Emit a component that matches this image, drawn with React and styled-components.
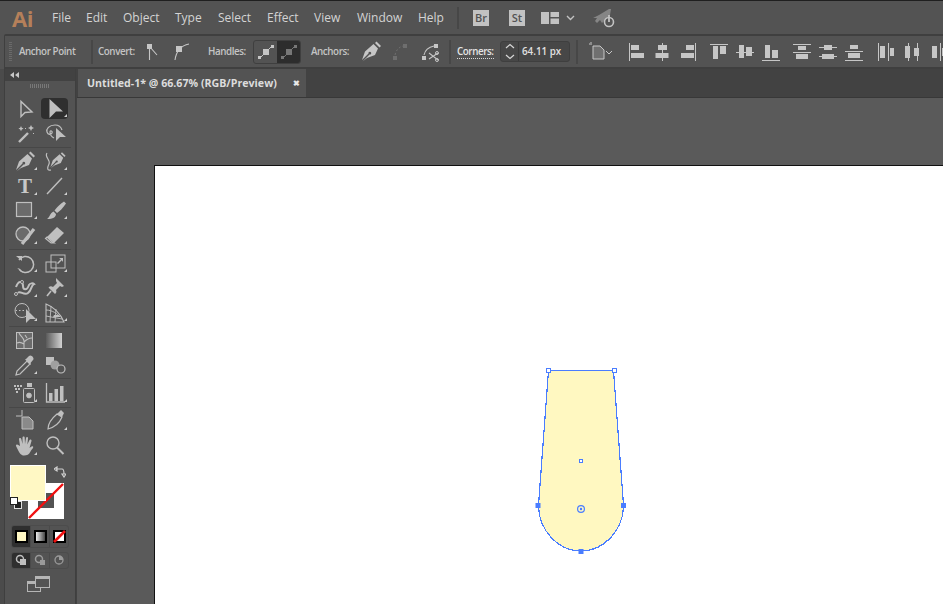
import React from "react";
import styled, { createGlobalStyle } from "styled-components";

const Global = createGlobalStyle`
  html, body { margin: 0; padding: 0; overflow: hidden; background: #535353; }
  * { box-sizing: border-box; }
`;
const UI = `"Open Sans", "Noto Sans", sans-serif`;

const Page = styled.div`
  width: 943px; height: 604px; display: flex; flex-direction: column; overflow: hidden;
  background: #535353; font-family: ${UI}; color: #cfcfcf;
`;
const MenuBar = styled.header`
  height: 34px; flex: none; display: flex; align-items: center; background: #535353;
  border-top: 1px solid #1f1f1f;
`;
const Logo = styled.div`
  width: 52px; padding-left: 12px; font: bold 22px "Open Sans", sans-serif; color: #b5805a; letter-spacing: -0.5px; line-height: 30px;
`;
const MenuItem = styled.div`
  width: ${p => p.$w}px; font-size: 12px; color: #d4d4d4; white-space: nowrap;
`;
const Sep = styled.div`
  width: 2px; height: ${p => p.$h || 22}px; flex: none; background: #474747; margin-left: ${p => p.$ml || 0}px;
`;
const Badge = styled.div`
  width: 16px; height: 16px; flex: none; background: #c2c2c2; color: #535353; margin-left: ${p => p.$ml}px;
  font: 600 11px/16px "Open Sans", sans-serif; text-align: center;
`;
const MenuGlyph = styled.svg`
  flex: none; margin-left: ${p => p.$ml}px; color: #c2c2c2;
`;
const ControlBar = styled.div`
  height: 35px; flex: none; display: flex; align-items: center; margin-left: 4px; background: #535353;
  border-top: 2px solid #3f3f3f; border-bottom: 2px solid #3f3f3f; border-left: 1px solid #3f3f3f; border-top-left-radius: 2px;
`;
const Grip = styled.div`
  width: 14px; height: 20px; flex: none; position: relative;
  &::before { content: ""; position: absolute; left: 4px; top: 0; width: 3px; height: 19px;
    background: repeating-linear-gradient(to bottom, #6a6a6a 0 1px, transparent 1px 2px); }
`;
const CLabel = styled.div`
  flex: none; width: ${p => p.$w}px; margin-left: ${p => p.$ml || 0}px; font-size: 9.8px; font-weight: 600; color: #c4c4c4; white-space: nowrap; letter-spacing: -0.42px;
  ${p => p.$dotted && `border-bottom: 1px dotted #d8d8d8; line-height: 13px; color: #e4e4e4;`}
`;
const CIcon = styled.svg`
  flex: none; display: block; margin-left: ${p => p.$ml || 0}px; color: ${p => p.$dim ? "#6e6e6e" : "#c6c6c6"};
`;
const HandleGroup = styled.div`
  flex: none; display: flex; margin-left: 7px; width: 48px; height: 24px; border: 1px solid #3f3f3f; border-radius: 3px; overflow: hidden;
`;
const HandleCell = styled.div`
  flex: 1; display: flex; align-items: center; justify-content: center; background: ${p => p.$on ? "#2d2d2d" : "transparent"};
  color: ${p => p.$on ? "#777" : "#c6c6c6"};
`;
const Corners = styled.div`
  flex: none; margin-left: 6px; width: 70px; height: 21px; display: flex; align-items: stretch; background: #474747; border: 1px solid #3f3f3f; border-radius: 3px;
`;
const Spinner = styled.div`
  width: 18px; flex: none; border-right: 1px solid #3a3a3a; display: flex; align-items: center; justify-content: center; color: #d8d8d8;
`;
const CornerValue = styled.div`
  font-size: 9.8px; font-weight: 600; color: #e0e0e0; line-height: 19px; padding-left: 3px; white-space: nowrap;
`;
const Workspace = styled.div`
  flex: 1; display: flex; min-height: 0;
`;
const ToolPanel = styled.aside`
  width: 77px; flex: none; padding-left: 4px; background: #4b4b4b; display: flex; border-right: 1px solid #424242;
`;
const ToolInner = styled.div`
  flex: 1; background: #535353; border-left: 1px solid #3f3f3f; border-right: 1px solid #3f3f3f; display: flex; flex-direction: column;
`;
const ToolHead = styled.div`
  height: 12px; flex: none; background: #424242; color: #c8c8c8; display: flex; align-items: center; padding-left: 5px;
`;
const ToolGrip = styled.div`
  height: 17px; flex: none; position: relative;
  &::before { content: ""; position: absolute; left: 25px; top: 3px; width: 19px; height: 4px;
    background: repeating-linear-gradient(to right, #787878 0 1px, transparent 1px 2px); }
`;
const ToolRow = styled.div`
  display: flex; height: ${p => p.$h || 24.5}px; padding-left: 5px;
`;
const Cell = styled.div`
  width: 30px; height: 100%; display: flex; align-items: center; justify-content: center; position: relative; color: #bfbfbf;
  &::before { ${p => p.$on && `content: ""; position: absolute; left: 1px; right: 2px; top: 0; bottom: 2px; background: #2f2f2f; border-radius: 4px;`} }
  &::after { ${p => p.$tri && `content: ""; position: absolute; right: 3px; bottom: 4px; border-left: 3px solid transparent; border-bottom: 3px solid #d0d0d0;`} }
  & > * { position: relative; z-index: 1; }
`;
const TypeGlyph = styled.span`
  font: bold 21px/24px "Liberation Serif", serif; color: #c8c8c8;
`;
const ToolSep = styled.div`
  height: 1px; flex: none; background: #474747; margin: ${p => p.$t ?? 1}px 4px ${p => p.$b ?? 2}px 4px;
`;
const Swatches = styled.div`
  height: 56px; margin-top: 6px; flex: none; position: relative;
`;
const FillSwatch = styled.div`
  position: absolute; left: 5px; top: 0; width: 36px; height: 36px; background: #fff8c4; border: 1px solid #fff; z-index: 2;
`;
const StrokeSwatch = styled.svg`
  position: absolute; left: 23px; top: 18px; z-index: 1;
`;
const SwapIcon = styled.svg`
  position: absolute; left: 49px; top: 1px;
`;
const DefaultIcon = styled.svg`
  position: absolute; left: 5px; top: 32px; z-index: 3;
`;
const ModeGroup = styled.div`
  flex: none; margin: ${p => p.$mt}px 0 0 6px; width: 58px; height: ${p => p.$h}px; display: flex; border: 1px solid #4c4c4c; border-radius: 3px; overflow: hidden;
`;
const ModeCell = styled.div`
  flex: 1; display: flex; align-items: center; justify-content: center; background: ${p => p.$on ? "#2f2f2f" : "transparent"};
  border-left: ${p => p.$first ? "none" : "1px solid #4a4a4a"};
`;
const ScreenMode = styled.div`
  flex: none; margin-top: 7px; display: flex; justify-content: center; padding-right: 2px;
`;
const Main = styled.main`
  flex: 1; display: flex; flex-direction: column; min-width: 0;
`;
const TabBar = styled.div`
  height: 29px; flex: none; background: #424242; border-bottom: 1px solid #383838; display: flex;
`;
const Tab = styled.div`
  width: 228px; margin-left: 1px; background: #535353; display: flex; align-items: center; justify-content: space-between; padding: 0 6px 0 9px;
  font-size: 10.65px; font-weight: 700; color: #dcdcdc; white-space: nowrap;
`;
const TabClose = styled.span`
  font-size: 8px; font-weight: 700; color: #e8e8e8; line-height: 1;
`;
const Canvas = styled.div`
  flex: 1; background: #5a5a5a; padding: 67px 0 0 77px; overflow: hidden;
`;
const Artboard = styled.div`
  width: 800px; height: 500px; background: #fff; border: 1px solid #111; position: relative;
`;
const ShapeLayer = styled.svg`
  position: absolute; left: 373px; top: 194px; overflow: visible;
`;

const menu = [["File", 34], ["Edit", 37], ["Object", 52], ["Type", 43], ["Select", 49], ["Effect", 47], ["View", 43], ["Window", 61], ["Help", 39]];

const P = ({ d, w = 1.4, f = "none" }) => <path d={d} fill={f} stroke="currentColor" strokeWidth={w} />;
const F = ({ d }) => <path d={d} fill="currentColor" />;

const nib = "M14.5 4 L19 8.5 L16 15 L8 18 L3.5 21.5 L10.5 14.5 A1.4 1.4 0 1 0 9.5 13.5 L3 20 L6 11.5 Z";
const cap = "M16 3 L17.5 1.5 L22 6 L20.5 7.5 Z";

const tools = {
  hollow: <P d="M8 3.5 L8 18.5 L12 14.5 L19 14 Z" />,
  solid: <F d="M6.5 1 L6.5 20 L13 13.5 L20 13.5 Z" />,
  wand: <><P d="M6 21 L15 12" w={2.4} /><F d="M18 4 l1 2 2 1 -2 1 -1 2 -1 -2 -2 -1 2 -1z M8 5 l.8 1.8 1.8.8 -1.8.8 -.8 1.8 -.8 -1.8 -1.8 -.8 1.8 -.8z" /><F d="M12 7h1v1h-1z M20 12h1v1h-1z" /></>,
  lasso: <><P d="M12 4 C6 4 3 8 4 11 C5 14 8 14 9 12 C10 10 7 9 7 11 C7 14 9 16 11 17 M12 4 C15 4 18 6 19 9" w={1.2} /><F d="M13 7 L13 20 L17 16 L23 16 Z" /></>,
  pen: <><F d={nib} /><F d={cap} /></>,
  curve: <><g transform="translate(5 1) scale(.8)"><F d={nib} /><F d={cap} /></g><P d="M4 3 C1 7 8 10 6 14 C4 18 4 21 8 20" w={1.2} /></>,
  line: <P d="M4 20 L19 4" w={1.4} />,
  rect: <rect x="3.5" y="3.5" width="15" height="14" fill="#6b6b6b" stroke="currentColor" strokeWidth="1.2" />,
  brush: <><F d="M21 2.5 L23 4.5 C20 9 17 12 14 14 L11.5 11.5 C14 8 17 5 21 2.5 Z" /><F d="M10.5 12.5 L13 15 C13 18 10 20 4 20 C7 18 7 14 10.5 12.5 Z" /></>,
  shaper: <><circle cx="10" cy="11" r="7" fill="#6b6b6b" stroke="currentColor" strokeWidth="1.3" /><P d="M9 21 L21 6" w={3.2} /></>,
  eraser: <><path d="M4 14 L14 4 L21 10 L11 20 Z" fill="currentColor" /><path d="M4 14 L8.5 18.5 L11 20 L8 20 L2.5 15.5 Z" fill="none" stroke="currentColor" strokeWidth="1.2" /></>,
  rotate: <><P d="M6 8 A8 8 0 1 1 6 17" w={1.5} /><path d="M5 16 A8 8 0 0 0 15 20" fill="none" stroke="currentColor" strokeDasharray="1.2 1.6" /><F d="M3 4 L9 4 L9 9 Z" /></>,
  scale: <><rect x="8" y="3" width="14" height="13" fill="none" stroke="currentColor" /><rect x="3" y="10" width="10" height="10" fill="none" stroke="currentColor" /><F d="M16 6 L20 6 L20 10 L18.8 8.2 L15 12 L14 11 L17.8 7.2 Z" /></>,
  warp: <><P d="M3 11 C6 3 10 6 10 10 C10 14 14 15 16 9 C17 7 20 7 21 8 C18 9 19 14 15 17 C11 20 7 14 5 17" w={2} /><circle cx="3" cy="18" r="1.5" fill="none" stroke="currentColor" /><circle cx="9" cy="6" r="1.5" fill="#535353" stroke="currentColor" /></>,
  pin: <><F d="M13 2 L21 10 L19 11 L17 10 L13 14 C14 16 13 17 12 18 L5.5 11.5 C7 10 8.5 10 10 11 L14 7 L13 5 Z" /><P d="M8 15 L4 20" w={1.6} /></>,
  free: <><circle cx="9" cy="9.5" r="7" fill="none" stroke="currentColor" /><F d="M2.5 9h1.5v1H2.5z M6 9h1.5v1H6z M9.5 9H11v1H9.5z" /><F d="M13 8 L13 22 L17 18 L23 18 Z" /></>,
  persp: <><P d="M3 3 L3 21 L21 21 C17 12 11 6 3 3 Z" w={1.1} /><P d="M3 9 C9 9 15 13 17 16 M3 15 L19 18 M8 5 L7 21 M13 8 L12 21" w={.9} /><F d="M11 14h5l1.5 2H10z" /></>,
  mesh: <><rect x="3.5" y="3.5" width="16" height="16" fill="#6b6b6b" stroke="currentColor" /><P d="M11 19 L11 12 C11 9 8 8 6 4 M11 13 C14 10 16 9 19 9 M11 15 C8 13 6 13 4 14 M12 6 L14 9" w={1.1} /></>,
  gradient: <><defs><linearGradient id="tg"><stop offset="0" stopColor="#5b5b5b" /><stop offset="1" stopColor="#d2d2d2" /></linearGradient></defs><rect x="3" y="4" width="16" height="15" fill="url(#tg)" /></>,
  dropper: <><P d="M3 21 L4 17 L14 7 L17 10 L7 20 Z" w={1.2} /><F d="M13 5 L16 2 C18 0 22 4 20 6 L17.5 9 L18 11 L12 5.5 Z" /></>,
  blend: <><F d="M3 3h8v8H3z" /><circle cx="12" cy="11" r="4.5" fill="#a0a0a0" /><circle cx="18" cy="15" r="4" fill="#535353" stroke="currentColor" strokeWidth="1.2" /></>,
  spray: <><F d="M14 2h5v4h-5z M1 4h2v2H1z M4 4h2v2H4z M7 4h2v2H7z M2 7h2v2H2z M5 7h2v2H5z M3 10h2v2H3z" /><rect x="10.5" y="7.5" width="11" height="14" rx="1" fill="#535353" stroke="currentColor" /><circle cx="16" cy="14.5" r="2.4" fill="#bfbfbf" stroke="#bfbfbf" /></>,
  graph: <><P d="M3.5 2 L3.5 21 L22 21" w={1.3} /><F d="M6 12h3.5v8H6z M11.5 8h3.5v12h-3.5z M17 5h3.5v15H17z" /></>,
  artboard: <><path d="M3 7 H9 M9 1 V7 " fill="none" stroke="currentColor" /><path d="M9 8 H16 L20 12 V20 H9 Z" fill="#8a8a8a" stroke="currentColor" /></>,
  slice: <><P d="M5 20 C5 15 8 10 14 5 L19 8 C17 13 12 18 5 20 Z" w={1.2} /><F d="M14 5 L18 1 L21 4 L19 8 Z" /></>,
  zoom: <><circle cx="10" cy="9" r="6" fill="none" stroke="currentColor" strokeWidth="1.4" /><P d="M14 13.5 L20.5 20" w={2} /></>,
  hand: <F d="M7 12 L6 5 C6 3.5 8 3.5 8.3 5 L9.5 10 L9.5 3.5 C9.5 2 11.7 2 11.7 3.5 L12 10 L13 4 C13.3 2.5 15.3 2.8 15 4.5 L14.3 10.5 L16.5 6 C17 4.8 19 5.5 18.5 7 L16.5 14 C17.5 13 19 11.5 20 12.5 C21 13.5 19 15 17.5 17.5 C16 20.5 14 21.5 11 21.5 C8 21.5 6.5 19 5.5 17 L3 12 C2.5 10.5 4.5 9.8 5.2 11 Z" />,
};

const Tool = ({ n, tri, on }) => (
  <Cell $tri={tri} $on={on}>
    {n === "type" ? <TypeGlyph>T</TypeGlyph> : <svg width="24" height="24" viewBox="0 0 24 24">{tools[n]}</svg>}
  </Cell>
);
const Row = ({ a, b, h }) => <ToolRow $h={h}>{a}{b}</ToolRow>;

const alignData = [
  { v: [2], r: [[4, 2, 8, 5], [4, 10, 13, 5]] },
  { v: [9], r: [[5, 2, 9, 5], [2.5, 10, 13, 5]] },
  { v: [16], r: [[7, 2, 8, 5], [2, 10, 13, 5]] },
  { h: [1], r: [[3, 3, 5, 13], [10, 3, 6, 8]] },
  { h: [9], r: [[3, 2, 5, 13], [10, 4, 6, 9]] },
  { h: [17], r: [[3, 2, 5, 13], [10, 7, 6, 8]] },
  { h: [1, 9], r: [[5, 3, 8, 4], [3, 11, 12, 5]] },
  { h: [4, 13], r: [[5, 2, 8, 5], [3, 11, 12, 5]] },
  { h: [8, 17], r: [[5, 2, 8, 4], [3, 10, 12, 5]] },
  { v: [1, 11], r: [[3, 3, 5, 12], [13, 5, 4, 8]] },
  { v: [5, 14], r: [[2, 3, 5, 12], [11, 5, 5, 8]] },
  { v: [11], r: [[3, 3, 5, 12], [13, 5, 5, 8]] },
];
const AlignIcon = ({ d, ml }) => (
  <CIcon $ml={ml} width="26" height="18" viewBox="-4 0 26 18">
    {(d.r).map((r, i) => <rect key={i} x={r[0]} y={r[1]} width={r[2]} height={r[3]} fill="currentColor" />)}
    {(d.v || []).map((x, i) => <rect key={i} x={x} y="0" width="1" height="18" fill="currentColor" />)}
    {(d.h || []).map((y, i) => <rect key={i} x="0" y={y} width="18" height="1" fill="currentColor" />)}
  </CIcon>
);
const handleSvg = (
  <svg width="18" height="18" viewBox="0 0 18 18">
    <path d="M3 15 L15 3" stroke="currentColor" strokeWidth="1" />
    <rect x="6" y="6" width="6" height="6" fill="currentColor" />
    <rect x="1" y="13" width="3" height="3" fill="currentColor" />
    <rect x="14" y="2" width="3" height="3" fill="currentColor" />
  </svg>
);

export default function App() {
  return (
    <Page>
      <Global />
      <MenuBar>
        <Logo>Ai</Logo>
        {menu.map(([t, w]) => <MenuItem key={t} $w={w}>{t}</MenuItem>)}
        <Sep $h={22} />
        <Badge $ml={14}>Br</Badge>
        <Badge $ml={20}>St</Badge>
        <MenuGlyph $ml={16} width="18" height="12" viewBox="0 0 18 12">
          <path d="M0 0h8v12H0z M9.5 0H18v5H9.5z M9.5 6.5H18V12H9.5z" fill="currentColor" />
        </MenuGlyph>
        <MenuGlyph $ml={7} width="9" height="6" viewBox="0 0 9 6">
          <path d="M1 1 L4.5 4.5 L8 1" fill="none" stroke="currentColor" strokeWidth="1.4" />
        </MenuGlyph>
        <MenuGlyph $ml={17} width="24" height="20" viewBox="0 0 24 20">
          <path d="M1 10 L7 7 L17 1 L19 1 L18 7 L13 12 C12 13 11 14 10 15 L8 12 L5 15 L3 13 L5 10 Z" fill="#858585" />
          <circle cx="17" cy="14" r="4.5" fill="#535353" stroke="currentColor" strokeWidth="1.6" />
          <path d="M17 7 V14" stroke="currentColor" strokeWidth="1.8" />
        </MenuGlyph>
      </MenuBar>

      <ControlBar>
        <Grip />
        <CLabel $w={72}>Anchor Point</CLabel>
        <Sep $h={24} />
        <CLabel $w={38} $ml={5}>Convert:</CLabel>
        <CIcon width="30" height="22" viewBox="0 0 30 22">
          <rect x="11" y="3" width="5" height="5" fill="currentColor" />
          <path d="M13.5 5 V19 M14 6 L21 14" fill="none" stroke="currentColor" strokeWidth="1.1" />
        </CIcon>
        <CIcon width="30" height="22" viewBox="0 0 30 22">
          <rect x="10" y="5" width="6" height="6" fill="currentColor" />
          <path d="M9 19 C10 12 13 5 23 3" fill="none" stroke="currentColor" strokeWidth="1.1" />
        </CIcon>
        <CLabel $w={38} $ml={12}>Handles:</CLabel>
        <HandleGroup>
          <HandleCell>{handleSvg}</HandleCell>
          <HandleCell $on>{handleSvg}</HandleCell>
        </HandleGroup>
        <CLabel $w={38} $ml={10}>Anchors:</CLabel>
        <CIcon $ml={4} width="30" height="24" viewBox="-3 0 24 24" >{tools.pen}</CIcon>
        <CIcon $dim width="30" height="22" viewBox="0 0 30 22">
          <rect x="10" y="15" width="4" height="4" fill="currentColor" />
          <rect x="20" y="3" width="4" height="4" fill="currentColor" />
          <path d="M12 14 C13 9 16 6 20 5" fill="none" stroke="currentColor" strokeDasharray="2 2" />
        </CIcon>
        <CIcon $ml={2} width="30" height="24" viewBox="0 0 30 24">
          <rect x="7" y="16" width="4" height="4" fill="currentColor" />
          <rect x="19" y="4" width="4" height="4" fill="currentColor" />
          <path d="M9 15 C10 10 14 7 19 6 M14 13 L23 20 M14 19 L23 13" fill="none" stroke="currentColor" strokeWidth="1.1" />
          <circle cx="22" cy="13" r="1.5" fill="none" stroke="currentColor" />
          <circle cx="22" cy="20" r="1.5" fill="none" stroke="currentColor" />
        </CIcon>
        <Sep $ml={4} $h={24} />
        <CLabel $w={37} $ml={6} $dotted>Corners:</CLabel>
        <Corners>
          <Spinner>
            <svg width="10" height="17" viewBox="0 0 10 17">
              <path d="M1 5 L5 1.5 L9 5 M1 12 L5 15.5 L9 12" fill="none" stroke="currentColor" strokeWidth="1.2" />
            </svg>
          </Spinner>
          <CornerValue>64.11 px</CornerValue>
        </Corners>
        <Sep $ml={6} $h={24} />
        <CIcon $ml={10} width="25" height="20" viewBox="0 0 25 20">
          <path d="M1 2h3 M3 0v1" stroke="currentColor" />
          <path d="M5 4 H12 L16 8 V17 H5 Z" fill="#707070" stroke="currentColor" />
          <path d="M18 9 L21 12 L24 9" fill="none" stroke="currentColor" strokeWidth="1" />
        </CIcon>
        {alignData.map((d, i) => <AlignIcon key={i} d={d} ml={i === 0 ? 10 : i === 3 || i === 6 ? 5 : i === 9 ? 6 : 0} />)}
      </ControlBar>

      <Workspace>
        <ToolPanel>
          <ToolInner>
            <ToolHead>
              <svg width="9" height="6" viewBox="0 0 9 6"><path d="M4 0 L0 3 L4 6 Z M9 0 L5 3 L9 6 Z" fill="currentColor" /></svg>
            </ToolHead>
            <ToolGrip />
            <Row h={23} a={<Tool n="hollow" />} b={<Tool n="solid" on tri />} />
            <Row a={<Tool n="wand" />} b={<Tool n="lasso" />} />
            <ToolSep />
            <Row a={<Tool n="pen" tri />} b={<Tool n="curve" tri />} />
            <Row a={<Tool n="type" tri />} b={<Tool n="line" tri />} />
            <Row a={<Tool n="rect" tri />} b={<Tool n="brush" tri />} />
            <Row a={<Tool n="shaper" tri />} b={<Tool n="eraser" tri />} />
            <ToolSep />
            <Row a={<Tool n="rotate" tri />} b={<Tool n="scale" tri />} />
            <Row a={<Tool n="warp" tri />} b={<Tool n="pin" tri />} />
            <Row a={<Tool n="free" tri />} b={<Tool n="persp" tri />} />
            <ToolSep />
            <Row a={<Tool n="mesh" />} b={<Tool n="gradient" />} />
            <Row a={<Tool n="dropper" tri />} b={<Tool n="blend" />} />
            <ToolSep $t={0} $b={2} />
            <Row a={<Tool n="spray" tri />} b={<Tool n="graph" tri />} />
            <ToolSep $t={1} $b={1} />
            <Row h={25.5} a={<Tool n="artboard" />} b={<Tool n="slice" tri />} />
            <Row a={<Tool n="hand" tri />} b={<Tool n="zoom" />} />
            <Swatches>
              <FillSwatch />
              <StrokeSwatch width="36" height="36" viewBox="0 0 36 36">
                <rect width="36" height="36" fill="#fff" />
                <rect x="10" y="10" width="16" height="15" fill="#535353" />
                <path d="M1 35 L35 1" stroke="#f01010" strokeWidth="2.4" />
              </StrokeSwatch>
              <SwapIcon width="12" height="12" viewBox="0 0 12 12">
                <path d="M2 3 H8 C10 3 10 5 10 8 M0 3 L3 1 V5 Z M8 8 H12 L10 11 Z" fill="none" stroke="#d0d0d0" strokeWidth="1.2" />
              </SwapIcon>
              <DefaultIcon width="12" height="12" viewBox="0 0 12 12">
                <rect x="4.5" y="4.5" width="7" height="7" fill="#222" stroke="#e0e0e0" />
                <rect x="0.5" y="0.5" width="7" height="7" fill="#fff" stroke="#222" />
              </DefaultIcon>
            </Swatches>
            <ModeGroup $mt={4} $h={23}>
              <ModeCell $first $on><svg width="13" height="13"><rect x="1" y="1" width="11" height="11" fill="#fff8c4" stroke="#000" strokeWidth="2" /></svg></ModeCell>
              <ModeCell><svg width="13" height="13"><defs><linearGradient id="mg"><stop offset="0" stopColor="#fff" /><stop offset="1" stopColor="#333" /></linearGradient></defs><rect x="1" y="1" width="11" height="11" fill="url(#mg)" stroke="#000" strokeWidth="2" /></svg></ModeCell>
              <ModeCell><svg width="13" height="13"><rect x="1" y="1" width="11" height="11" fill="#fff" stroke="#000" strokeWidth="2" /><path d="M1 12 L12 1" stroke="#f01010" strokeWidth="2.6" /></svg></ModeCell>
            </ModeGroup>
            <ModeGroup $mt={4} $h={17}>
              <ModeCell $first $on><svg width="12" height="12"><circle cx="5" cy="5" r="3.5" fill="none" stroke="#c0c0c0" strokeWidth="1.5" /><rect x="5" y="5" width="6" height="6" fill="#c0c0c0" /></svg></ModeCell>
              <ModeCell><svg width="12" height="12"><circle cx="5" cy="5" r="3.5" fill="none" stroke="#9a9a9a" strokeWidth="1.5" /><rect x="6" y="6" width="5" height="5" fill="#9a9a9a" /></svg></ModeCell>
              <ModeCell><svg width="12" height="12"><circle cx="6" cy="6" r="4" fill="none" stroke="#9a9a9a" strokeWidth="1.3" /><path d="M6 6 V2 A4 4 0 0 1 10 6 Z" fill="#9a9a9a" /></svg></ModeCell>
            </ModeGroup>
            <ScreenMode>
              <svg width="24" height="16" viewBox="0 0 24 16">
                <rect x="0.5" y="5.5" width="13" height="10" fill="none" stroke="#b5b5b5" />
                <rect x="8.5" y="0.5" width="14" height="11" fill="#535353" stroke="#b5b5b5" />
                <rect x="9" y="1" width="13" height="2" fill="#b5b5b5" />
                <rect x="1" y="6" width="7" height="2" fill="#b5b5b5" />
              </svg>
            </ScreenMode>
          </ToolInner>
        </ToolPanel>
        <Main>
          <TabBar>
            <Tab>Untitled-1* @ 66.67% (RGB/Preview)<TabClose>✖</TabClose></Tab>
          </TabBar>
          <Canvas>
            <Artboard>
              <ShapeLayer width="100" height="200" viewBox="528 360 100 200">
                <path d="M548.5 370.5 H613.5 L623.5 505 C623.5 530 604 551 581 551 C558 551 538.5 530 538.5 505 Z" fill="#fff8c1" stroke="#4a7dff" strokeWidth="1.2" shapeRendering="crispEdges" />
                <rect x="546.5" y="368.5" width="4" height="4" fill="#fff" stroke="#4a7dff" shapeRendering="crispEdges" />
                <rect x="612.5" y="368.5" width="4" height="4" fill="#fff" stroke="#4a7dff" shapeRendering="crispEdges" />
                <rect x="579.5" y="459.5" width="3" height="3" fill="#fff" stroke="#4a7dff" shapeRendering="crispEdges" />
                <rect x="535.5" y="503" width="5" height="5" fill="#4a7dff" />
                <rect x="621" y="503" width="5" height="5" fill="#4a7dff" />
                <rect x="578.5" y="549" width="5" height="5" fill="#4a7dff" />
                <circle cx="581" cy="509" r="3.4" fill="none" stroke="#4a7dff" strokeWidth="1.2" />
                <circle cx="581" cy="509" r="1.2" fill="#4a7dff" />
              </ShapeLayer>
            </Artboard>
          </Canvas>
        </Main>
      </Workspace>
    </Page>
  );
}
